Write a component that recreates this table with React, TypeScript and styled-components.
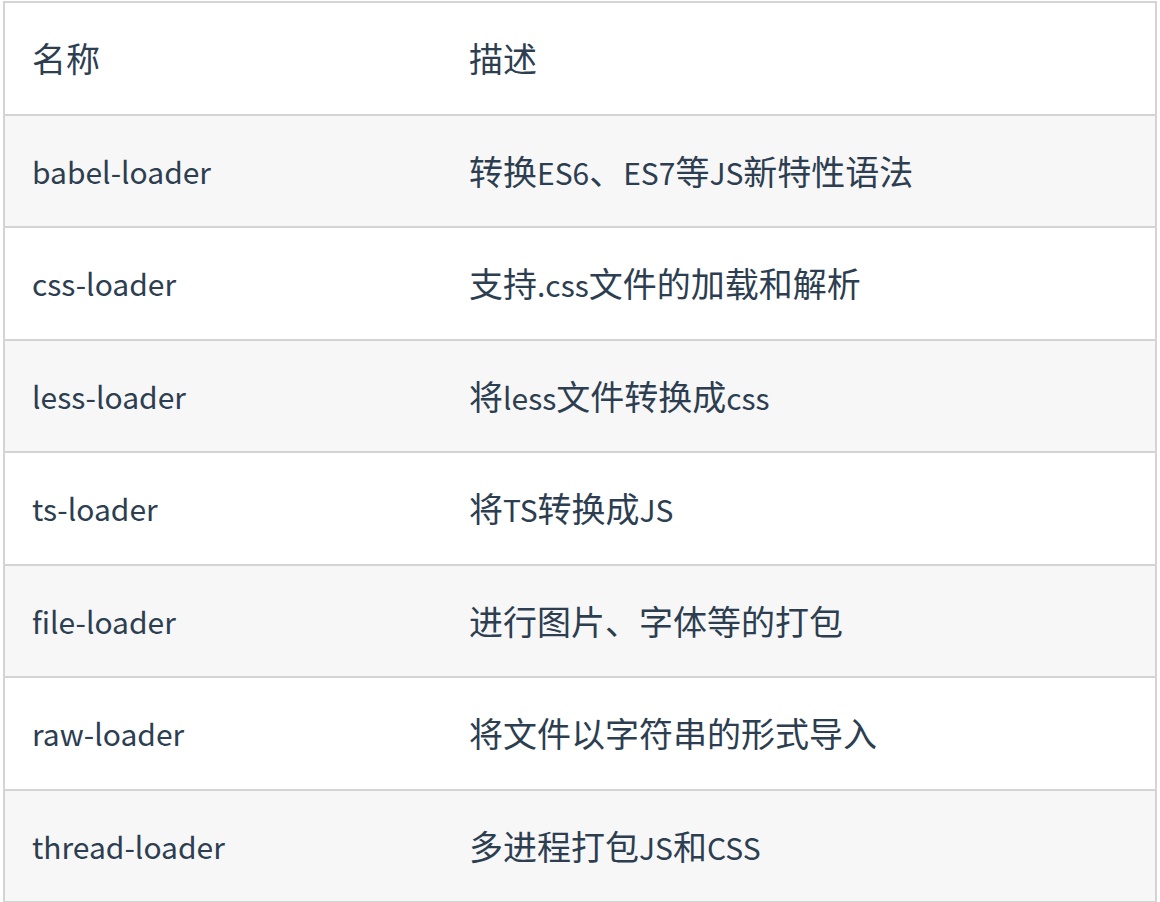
import { FC } from "react"
import styled, { createGlobalStyle } from "styled-components"

const rows = [
  { name: "babel-loader", desc: "转换ES6、ES7等JS新特性语法" },
  { name: "css-loader", desc: "支持.css文件的加载和解析" },
  { name: "less-loader", desc: "将less文件转换成css" },
  { name: "ts-loader", desc: "将TS转换成JS" },
  { name: "file-loader", desc: "进行图片、字体等的打包" },
  { name: "raw-loader", desc: "将文件以字符串的形式导入" },
  { name: "thread-loader", desc: "多进程打包JS和CSS" },
]

// CJK glyphs come out a bit larger than the latin ones in the source
const CJK = /([\u3000-\u303f\u4e00-\u9fff\uff00-\uffef]+)/

const MixedText: FC<{ text: string }> = ({ text }) => (
  <>
    {text.split(CJK).map((part, i) =>
      CJK.test(part) ? <Han key={i}>{part}</Han> : part ? <span key={i}>{part}</span> : null
    )}
  </>
)

const App: FC = () => {
  return (
    <Page>
      <GlobalStyle />
      <Table>
        <Row>
          <Cell>
            <MixedText text="名称" />
          </Cell>
          <Cell>
            <MixedText text="描述" />
          </Cell>
        </Row>
        {rows.map((row, i) => (
          <Row key={row.name} $striped={i % 2 === 0}>
            <Cell>
              <MixedText text={row.name} />
            </Cell>
            <Cell>
              <MixedText text={row.desc} />
            </Cell>
          </Row>
        ))}
      </Table>
    </Page>
  )
}

const GlobalStyle = createGlobalStyle`
  html, body {
    margin: 0;
    background: #ffffff;
  }
`

const Page = styled.div`
  padding: 1px 3px 0 3px;
  width: 1160px;
  box-sizing: border-box;
`

const Table = styled.div`
  border: 2px solid #d4d4d4;
  border-bottom: none;
  width: 1154px;
  box-sizing: border-box;
  font-family: "Noto Sans CJK SC", "Source Sans Pro", sans-serif;
  font-size: 30px;
  color: #2c3e50;
  font-variant-ligatures: none;
`

const Row = styled.div<{ $striped?: boolean }>`
  display: grid;
  grid-template-columns: 437px 1fr;
  align-items: center;
  height: 112.5px;
  box-sizing: border-box;
  border-bottom: 2px solid #d4d4d4;
  background: ${(p) => (p.$striped ? "#f7f7f7" : "#ffffff")};
`

const Cell = styled.div`
  padding: 0 27px;
  white-space: nowrap;
  line-height: 1.4;
`

const Han = styled.span`
  font-size: 34px;
`

export default App
